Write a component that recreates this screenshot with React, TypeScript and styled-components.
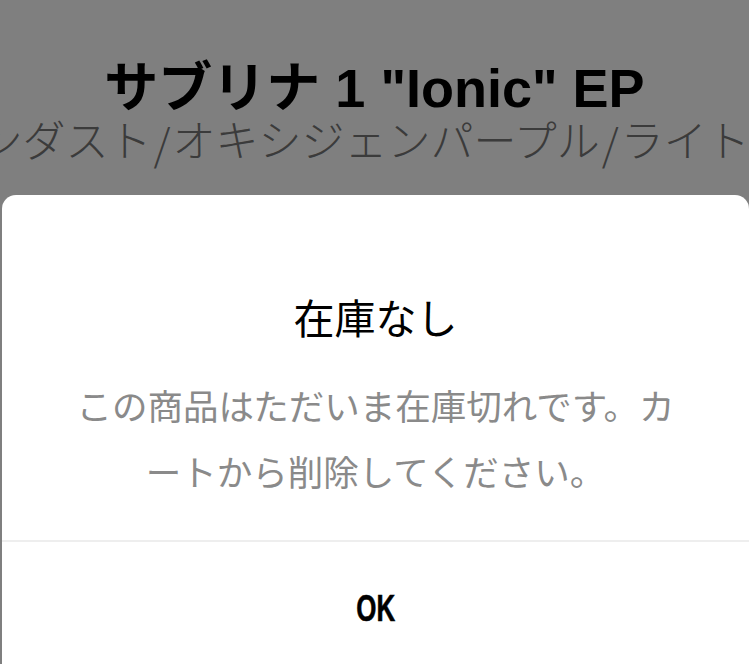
import React from 'react'
import styled, { createGlobalStyle } from 'styled-components'

const GlobalStyle = createGlobalStyle`
    html, body {
        margin: 0;
        padding: 0;
        background: #ffffff;
        overflow: hidden;
    }
    * {
        box-sizing: border-box;
    }
`

const jpFont = `"Liberation Sans", "Noto Sans CJK JP", sans-serif`

const Page = styled.div`
    width: 749px;
    height: 664px;
    overflow: hidden;
    background: #ffffff;
    font-family: ${jpFont};
    padding-top: 58px;
`

const ProductTitle = styled.h1`
    margin: 0;
    font-size: 54px;
    line-height: 60px;
    font-weight: 700;
    color: #000000;
    text-align: center;
    white-space: nowrap;
`

// colour names run wider than the screen, centred and clipped on both sides
const ProductColors = styled.div`
    display: flex;
    justify-content: center;
    padding-left: 68px;
    white-space: nowrap;
    font-size: 43px;
    line-height: 48px;
    font-weight: 300;
    color: #767676;
`

const Slash = styled.span`
    display: inline-block;
    padding: 0 2px;
    font-family: "Noto Sans CJK JP", sans-serif;
    font-weight: 300;
    line-height: 48px;
`

const Overlay = styled.div`
    position: fixed;
    inset: 0;
    background: rgba(0, 0, 0, 0.5);
    display: flex;
    flex-direction: column;
    justify-content: flex-end;
`

const Sheet = styled.div`
    margin-left: 2px;
    height: 469px;
    background: #ffffff;
    border-radius: 14px 14px 0 0;
    display: flex;
    flex-direction: column;
    font-family: ${jpFont};
`

const SheetBody = styled.div`
    padding: 101px 62px 33px;
    text-align: center;
`

const SheetTitle = styled.h2`
    margin: 0 0 31px;
    font-size: 41px;
    line-height: 48px;
    font-weight: 400;
    color: #000000;
`

const SheetMessage = styled.p`
    margin: 0;
    font-size: 35.5px;
    line-height: 66px;
    color: #8a8a8a;
    line-break: loose;
`

const Divider = styled.hr`
    margin: 0;
    border: none;
    border-top: 2px solid #eeeeee;
`

const OkButton = styled.button`
    flex: 1;
    display: flex;
    justify-content: center;
    align-items: flex-start;
    padding-top: 49px;
    border: none;
    background: transparent;
    cursor: pointer;
`

const OkLabel = styled.span`
    display: inline-block;
    font-family: "Liberation Sans", sans-serif;
    font-size: 37px;
    line-height: 36px;
    font-weight: 700;
    color: #000000;
    transform: scaleX(0.7);
    -webkit-text-stroke: 0.6px #000000;
`

const colors = ['シアンダスト', 'オキシジェンパープル', 'ライトスモーク']

export default function App() {
    return (
        <>
            <GlobalStyle />
            <Page>
                <ProductTitle>サブリナ 1 "Ionic" EP</ProductTitle>
                <ProductColors>
                    {colors.map((c, i) => (
                        <React.Fragment key={c}>
                            {i > 0 && <Slash>/</Slash>}
                            {c}
                        </React.Fragment>
                    ))}
                </ProductColors>
            </Page>
            <Overlay>
                <Sheet role="dialog" aria-modal="true">
                    <SheetBody>
                        <SheetTitle>在庫なし</SheetTitle>
                        <SheetMessage>
                            この商品はただいま在庫切れです。カートから削除してください。
                        </SheetMessage>
                    </SheetBody>
                    <Divider />
                    <OkButton type="button">
                        <OkLabel>OK</OkLabel>
                    </OkButton>
                </Sheet>
            </Overlay>
        </>
    )
}
